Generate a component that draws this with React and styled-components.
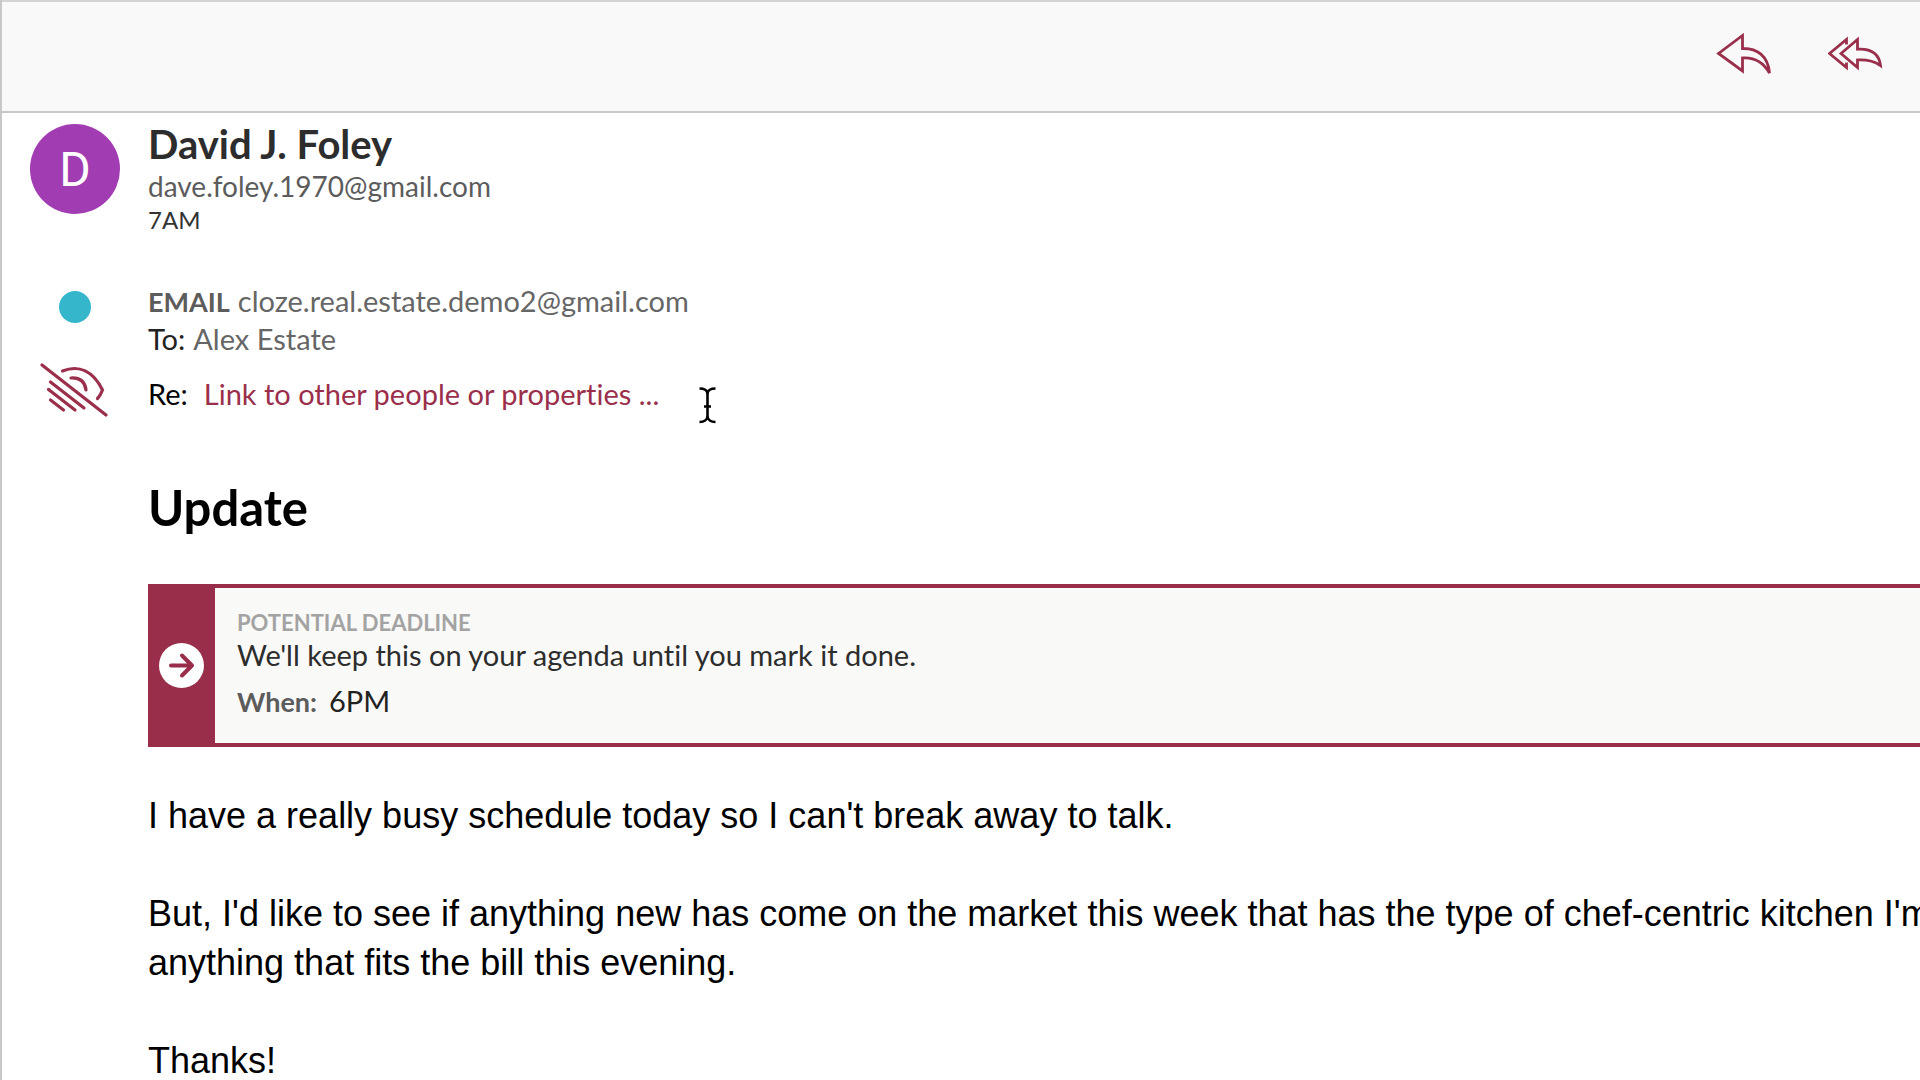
import React from 'react';
import styled, { createGlobalStyle } from 'styled-components';

const GlobalStyle = createGlobalStyle`
    * {
        box-sizing: border-box;
    }
    body {
        margin: 0;
        background: #fff;
        font-family: Lato, "Open Sans", sans-serif;
        font-variant-ligatures: none;
    }
    h1, h2, p {
        margin: 0;
    }
`;

const Page = styled.main`
    position: relative;
    height: 100vh;
    overflow: hidden;
    border-left: 2px solid #c8c8c8;
`;

const Toolbar = styled.header`
    display: flex;
    justify-content: flex-end;
    align-items: center;
    gap: 56px;
    height: 113px;
    padding: 0 36px 6px 0;
    background: #f9f9f9;
    border-top: 2px solid #d4d4d4;
    border-bottom: 2px solid #c8c8c8;
`;

const IconButton = styled.button`
    display: flex;
    padding: 0;
    border: 0;
    background: none;
    cursor: pointer;
`;

const Row = styled.section`
    display: grid;
    grid-template-columns: 146px minmax(0, 1fr);
    align-items: ${props => props.$align || 'start'};
    margin-top: ${props => props.$top || 0}px;
`;

const Gutter = styled.div`
    display: flex;
    justify-content: center;
`;

const Avatar = styled.div`
    display: flex;
    align-items: center;
    justify-content: center;
    width: 90px;
    height: 90px;
    margin-top: 4px;
    border-radius: 50%;
    background: #a23cb3;
    color: #fff;
    font: 400 48px Roboto, sans-serif;
`;

const Dot = styled.div`
    width: 32px;
    height: 32px;
    margin-top: 9px;
    border-radius: 50%;
    background: #35b6cb;
`;

const Name = styled.h1`
    color: #2d2d2d;
    font-size: 40px;
    line-height: 48px;
    font-weight: 700;
`;

const Address = styled.p`
    color: #5c5c5c;
    font-size: 28px;
    line-height: 36px;
`;

const Time = styled.p`
    color: #333;
    font-size: 24px;
    line-height: 32px;
`;

const Line = styled.p`
    color: ${props => props.$color || '#666'};
    font-size: 29px;
    line-height: 38px;
`;

const Label = styled.span`
    margin-right: ${props => props.$gap || 8}px;
    color: ${props => props.$color || '#222'};
`;

const BoldLabel = styled(Label)`
    font-size: 27px;
    line-height: 1;
    font-weight: 700;
`;

const Link = styled.a`
    color: #9a2f4b;
    text-decoration: none;
`;

const Subject = styled.h2`
    color: #000;
    font-size: 49px;
    line-height: 60px;
    font-weight: 700;
`;

const Deadline = styled.div`
    display: flex;
    margin-top: 47px;
    background: #f9f9f7;
    border: solid #982e4a;
    border-width: 4px 0;
`;

const Badge = styled.div`
    display: flex;
    align-items: center;
    justify-content: center;
    width: 67px;
    background: #982e4a;
`;

const DeadlineText = styled.div`
    display: flex;
    flex-direction: column;
    padding: 22px 22px 23px;
`;

const Caption = styled.p`
    color: #a3a3a3;
    font-size: 22px;
    line-height: 26px;
    font-weight: 700;
`;

const When = styled(Line)`
    margin-top: 8px;
`;

const Body = styled.div`
    margin-top: 44px;
    color: #000;
    font-family: "Liberation Sans", Arial, sans-serif;
    font-size: 36px;
    line-height: 49px;
    white-space: nowrap;

    p + p {
        margin-top: 49px;
    }
`;

const Pointer = styled.svg`
    position: absolute;
    left: 694px;
    top: 386px;
`;

const stroke = {
    fill: 'none',
    stroke: '#9a2f4b',
    strokeWidth: 2.8,
    strokeLinejoin: 'miter',
};

const ReplyIcon = () => (
    <svg width="56" height="44" viewBox="0 0 56 44" {...stroke}>
        <path d="M2.5 21.5 L26.5 3.5 V16.5 C41 16 52 24 53.5 41 C47 30 39 25 26.5 26 V39 Z" />
    </svg>
);

const ReplyAllIcon = () => (
    <svg width="56" height="44" viewBox="0 0 56 44" {...stroke}>
        <path d="M18.5 12.5 V7.5 L1.5 21.5 L18.5 35.5 V30.5" />
        <path d="M13 21.5 L29.5 7.5 V17.2 C42 16.5 51 21 52.5 33.5 C46 29 40 27.5 29.5 28 V35.5 Z" />
    </svg>
);

const HiddenIcon = () => (
    <svg width="70" height="64" viewBox="0 0 70 64" fill="none" stroke="#9a2f4b" strokeWidth="3.2" strokeLinecap="round">
        <path d="M2 3 L66 53" />
        <path d="M22.5 9 C39 2.5 53 9 62.5 28 C61 32 59.5 34.5 57.5 36.5" />
        <path d="M31 16 C40 15.5 45 20 46 28" />
        <path d="M10.5 20 L44 46" />
        <path d="M8.5 27.5 L35 48" />
        <path d="M10.5 38 L23.5 48" />
    </svg>
);

const ArrowIcon = () => (
    <svg width="45" height="45" viewBox="0 0 45 45" fill="none" stroke="#982e4a" strokeWidth="4" strokeLinecap="round" strokeLinejoin="round">
        <circle cx="22.5" cy="22.5" r="22.5" fill="#fff" stroke="none" />
        <path d="M12 22.5 H33 M23 12.5 L33 22.5 L23 32.5" />
    </svg>
);

const App = () => (
    <Page>
        <GlobalStyle />
        <Toolbar>
            <IconButton aria-label="Reply"><ReplyIcon /></IconButton>
            <IconButton aria-label="Reply all"><ReplyAllIcon /></IconButton>
        </Toolbar>
        <Row $top={7}>
            <Gutter><Avatar>D</Avatar></Gutter>
            <div>
                <Name>David J. Foley</Name>
                <Address>dave.foley.1970@gmail.com</Address>
                <Time>7AM</Time>
            </div>
        </Row>
        <Row $top={46}>
            <Gutter><Dot /></Gutter>
            <div>
                <Line><BoldLabel $color="#5c5c5c">EMAIL</BoldLabel>cloze.real.estate.demo2@gmail.com</Line>
                <Line><Label>To:</Label>Alex Estate</Line>
            </div>
        </Row>
        <Row $top={4} $align="center">
            <Gutter><HiddenIcon /></Gutter>
            <Line><Label $color="#000" $gap={16}>Re:</Label><Link href="#link">Link to other people or properties ...</Link></Line>
        </Row>
        <Row $top={51}>
            <Gutter />
            <div>
                <Subject>Update</Subject>
                <Deadline>
                    <Badge><ArrowIcon /></Badge>
                    <DeadlineText>
                        <Caption>POTENTIAL DEADLINE</Caption>
                        <Line $color="#2d2d2d">We'll keep this on your agenda until you mark it done.</Line>
                        <When $color="#222"><BoldLabel $color="#5c5c5c" $gap={12}>When:</BoldLabel>6PM</When>
                    </DeadlineText>
                </Deadline>
                <Body>
                    <p>I have a really busy schedule today so I can't break away to talk.</p>
                    <p>
                        But, I'd like to see if anything new has come on the market this week that has the type of chef-centric kitchen I'm<br />
                        anything that fits the bill this evening.
                    </p>
                    <p>Thanks!</p>
                </Body>
            </div>
        </Row>
        <Pointer width="22" height="40" viewBox="0 0 22 40" fill="none" stroke="#000" strokeWidth="2.6">
            <path d="M3.5 2.5 C8 2.5 11.5 4 11.5 8 V30 C11.5 34 8 36 3.5 36 M19.5 2.5 C15 2.5 11.5 4 11.5 8 M11.5 30 C11.5 34 15 36 19.5 36 M8 20.5 H15" />
        </Pointer>
    </Page>
);

export default App;
